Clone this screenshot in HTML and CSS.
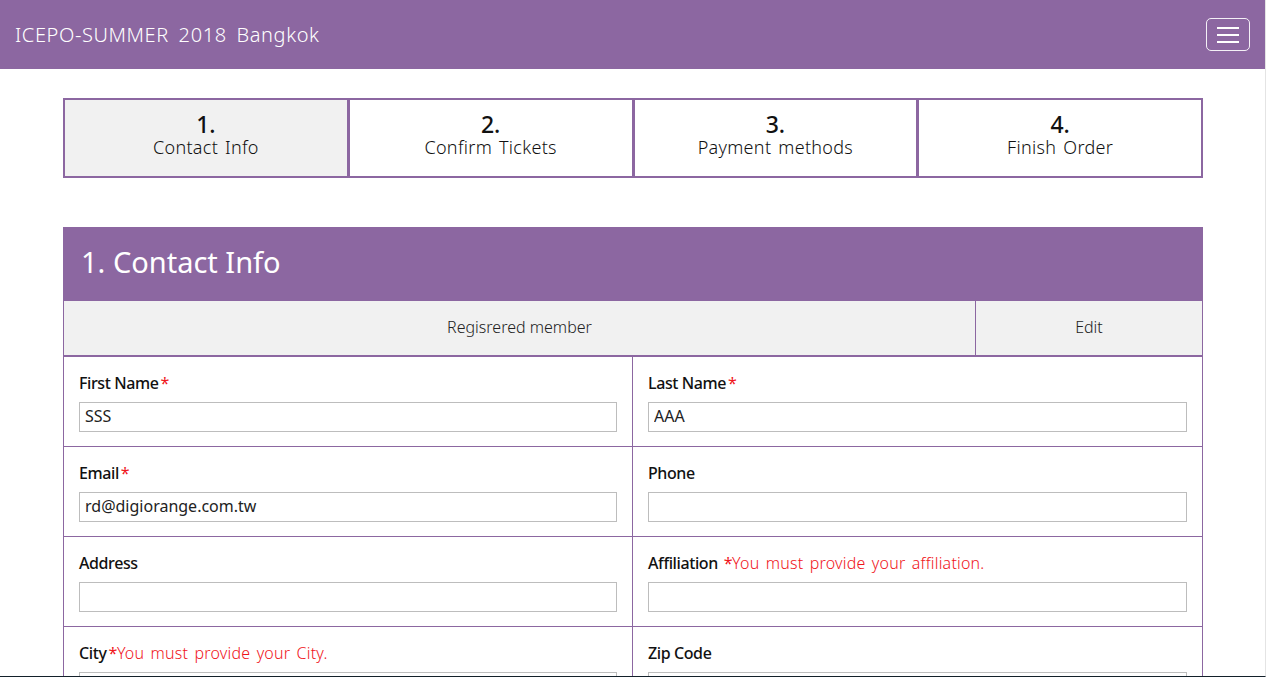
FILE: index.html
```html
<!DOCTYPE html>
<html lang="en">
<head>
<meta charset="utf-8">
<title>ICEPO-SUMMER 2018 Bangkok</title>
<link rel="stylesheet" href="styles.css">
</head>
<body>
<header class="navbar">
  <div class="brand">ICEPO-SUMMER 2018 Bangkok</div>
  <button class="toggler" aria-label="menu">
    <span class="bar"></span><span class="bar"></span><span class="bar"></span>
  </button>
</header>
<main class="container">
  <ol class="steps">
    <li class="step active"><span class="num">1.</span><span class="label">Contact Info</span></li>
    <li class="step"><span class="num">2.</span><span class="label">Confirm Tickets</span></li>
    <li class="step"><span class="num">3.</span><span class="label">Payment methods</span></li>
    <li class="step"><span class="num">4.</span><span class="label">Finish Order</span></li>
  </ol>
  <section class="panel">
    <h2 class="panel-title">1. Contact Info</h2>
    <div class="member-row">
      <div class="member">Regisrered member</div>
      <div class="edit">Edit</div>
    </div>
    <div class="form-grid">
      <div class="field"><label class="lbl">First Name<span class="req">*</span></label><input class="inp" value="SSS"></div>
      <div class="field"><label class="lbl">Last Name<span class="req">*</span></label><input class="inp" value="AAA"></div>
      <div class="field"><label class="lbl">Email<span class="req">*</span></label><input class="inp" value="rd@digiorange.com.tw"></div>
      <div class="field"><label class="lbl">Phone</label><input class="inp" value=""></div>
      <div class="field"><label class="lbl">Address</label><input class="inp" value=""></div>
      <div class="field"><label class="lbl">Affiliation <span class="req">*</span><span class="err">You must provide your affiliation.</span></label><input class="inp" value=""></div>
      <div class="field"><label class="lbl">City<span class="req">*</span><span class="err">You must provide your City.</span></label><input class="inp" value=""></div>
      <div class="field"><label class="lbl">Zip Code</label><input class="inp" value=""></div>
    </div>
  </section>
</main>
</body>
</html>
```
FILE: styles.css
```css
* { box-sizing: border-box; }
html, body { margin: 0; padding: 0; background: #fff; }
body {
  font-family: "Noto Sans", "Open Sans", sans-serif;
  color: #222;
  height: 677px;
  overflow: hidden;
  border-bottom: 1px solid #13202a;
  border-right: 1px solid #e4e4e4;
}
.navbar {
  height: 69px;
  background: #8c67a1;
  display: flex;
  align-items: center;
  justify-content: space-between;
  padding: 0 15px 0 15px;
}
.brand {
  color: #fff;
  font-size: 20px;
  font-weight: 300;
  word-spacing: 4px;
  letter-spacing: 0.6px;
}
.toggler {
  width: 44px;
  height: 33px;
  border: 1px solid rgba(255,255,255,0.9);
  border-radius: 5px;
  background: transparent;
  display: flex;
  flex-direction: column;
  justify-content: center;
  align-items: center;
  gap: 5px;
  padding: 0;
}
.bar { display: block; width: 22px; height: 2px; background: #fff; }
.container {
  width: 1140px;
  margin: 29px 0 0 63px;
}
.steps {
  list-style: none;
  margin: 0;
  padding: 0;
  display: flex;
  height: 80px;
}
.step {
  flex: 1;
  border: 2px solid #8c67a1;
  margin-left: -1px;
  display: flex;
  flex-direction: column;
  align-items: center;
  justify-content: center;
  padding-bottom: 4px;
  color: #111;
}
.step:first-child { margin-left: 0; }
.step.active { background: #f1f1f1; }
.num { font-size: 23px; font-weight: 500; line-height: 20px; margin-bottom: 3px; }
.label { font-size: 18px; line-height: 21px; font-weight: 300; letter-spacing: 0.3px; word-spacing: 2px; }
.panel { margin-top: 49px; border-left: 1px solid #8c67a1; border-right: 1px solid #8c67a1; }
.panel-title {
  margin: 0 -1px;
  height: 74px;
  background: #8c67a1;
  color: #fff;
  font-size: 29px;
  font-weight: 400;
  display: flex;
  align-items: center;
  padding-left: 18px;
  padding-bottom: 6px;
}
.member-row {
  display: flex;
  height: 56px;
  background: #f1f1f1;
  border-bottom: 2px solid #8c67a1;
  font-size: 16px;
  font-weight: 300;
  color: #222;
}
.member { flex: 0 0 912px; display: flex; align-items: center; justify-content: center; border-right: 1px solid #8c67a1; padding-bottom: 2px; }
.edit { flex: 1; display: flex; align-items: center; justify-content: center; padding-bottom: 2px; }
.form-grid {
  display: grid;
  grid-template-columns: 569px 1fr;
}
.field {
  height: 90px;
  border-bottom: 1px solid #8c67a1;
  padding: 15px 15px 0 15px;
  display: flex;
  flex-direction: column;
}
.field:nth-child(odd) { border-right: 1px solid #8c67a1; }
.lbl { font-size: 16px; font-weight: 500; color: #111; letter-spacing: -0.4px; line-height: 22px; height: 30px; }
.req { color: #f0141a; font-weight: 400; margin-left: 2px; }
.err { color: #f0141a; font-weight: 300; letter-spacing: 0.2px; word-spacing: 2px; }
.inp {
  height: 30px;
  width: 100%;
  border: 1px solid #bdbdbd;
  padding: 0 5px 2px;
  font-family: inherit;
  font-size: 16px;
  color: #222;
  outline: none;
}
```
